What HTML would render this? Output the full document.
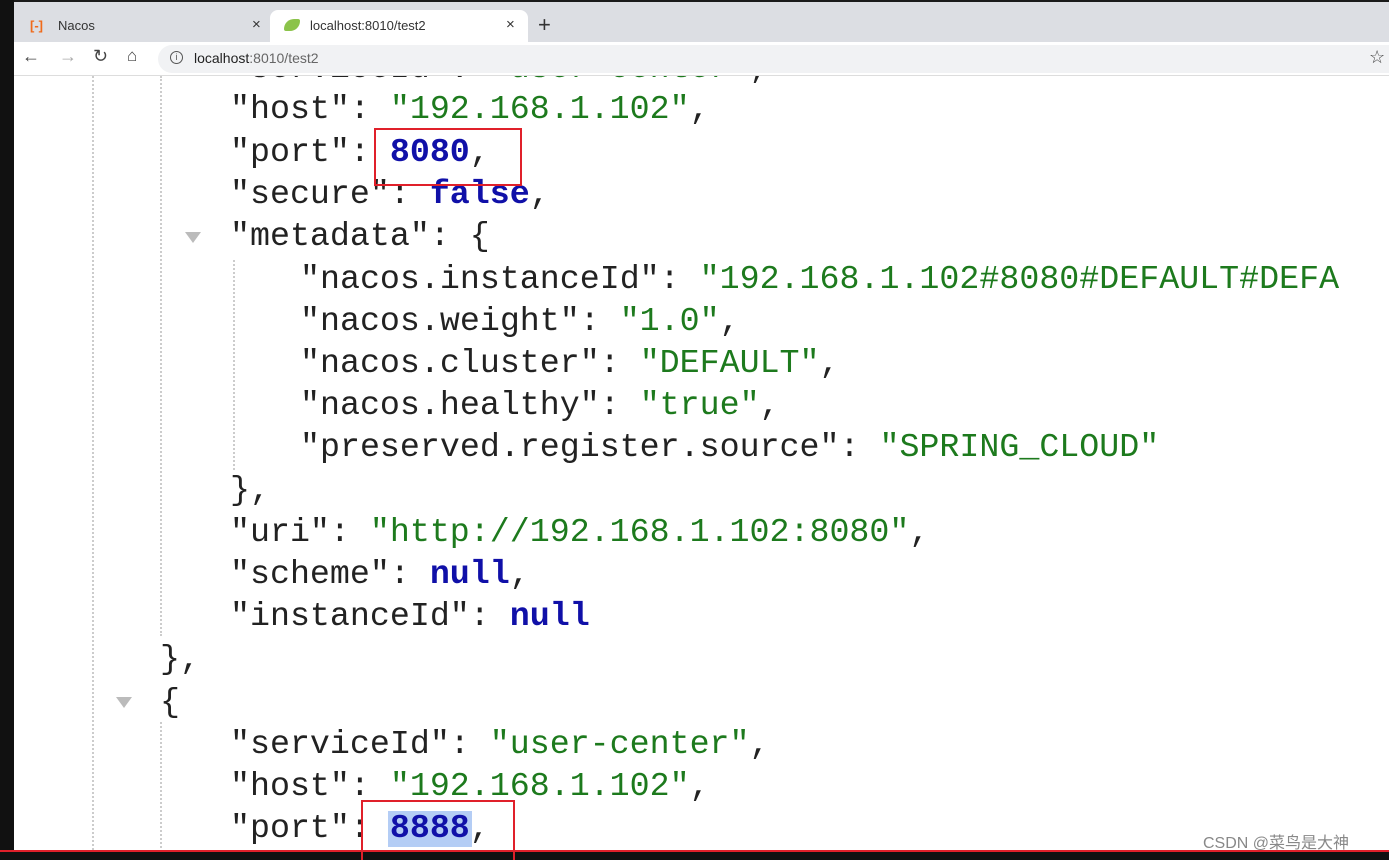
<!DOCTYPE html><html><head><style>
html,body{margin:0;width:1389px;height:860px;overflow:hidden}
body{background:#fff;position:relative;font-family:"Liberation Sans",sans-serif}
.l{position:absolute;font-family:"Liberation Mono",monospace;font-size:33.3px;line-height:42px;color:#222;white-space:pre}
.s{color:#1d7a1d}.n{color:#1010a8;font-weight:bold}
.dot{position:absolute;border-left:2px dotted #ccc;width:0}
.box{position:absolute;border:2px solid #e0202a}
</style></head><body>
<div class="l" style="left:230px;top:47px">"serviceId": <span class="s">"user-center"</span>,</div>
<div style="position:absolute;left:0;top:0;width:1389px;height:2px;background:#1a1a1a"></div>
<div style="position:absolute;left:0;top:2px;width:1389px;height:40px;background:#dcdee3"></div>
<div style="position:absolute;left:14px;top:14px;width:256px;height:28px;font-size:13px;color:#333"><span style="position:absolute;left:16px;top:4px;color:#f06a1a;font-weight:bold">[-]</span><span style="position:absolute;left:44px;top:4px">Nacos</span><span style="position:absolute;left:238px;top:2px;font-size:15px">×</span></div>
<div style="position:absolute;left:270px;top:10px;width:258px;height:32px;background:#fff;border-radius:8px 8px 0 0;font-size:13px;color:#333"><span style="position:absolute;left:14px;top:9px;width:16px;height:12px;background:#8bc34a;border-radius:10px 2px 10px 2px"></span><span style="position:absolute;left:40px;top:8px">localhost:8010/test2</span><span style="position:absolute;left:236px;top:6px;font-size:15px">×</span></div>
<div style="position:absolute;left:538px;top:12px;font-size:22px;color:#333">+</div>
<div style="position:absolute;left:0;top:42px;width:1389px;height:33px;background:#fff;border-bottom:1px solid #ddd"></div>
<div style="position:absolute;left:22px;top:46px;font-size:18px;color:#444">←</div>
<div style="position:absolute;left:59px;top:46px;font-size:18px;color:#aaa">→</div>
<div style="position:absolute;left:93px;top:46px;font-size:18px;color:#444">↻</div>
<div style="position:absolute;left:127px;top:46px;font-size:17px;color:#444">⌂</div>
<div style="position:absolute;left:158px;top:45px;width:1231px;height:28px;background:#f1f2f4;border-radius:14px 0 0 14px"></div>
<div style="position:absolute;left:170px;top:51px;width:11px;height:11px;border:1.5px solid #555;border-radius:50%;font-size:9px;text-align:center;line-height:11px;color:#555">i</div>
<div style="position:absolute;left:194px;top:50px;font-size:14px;color:#222">localhost<span style="color:#666">:8010/test2</span></div>
<div style="position:absolute;left:1369px;top:47px;font-size:18px;color:#444">☆</div>
<div style="position:absolute;left:0;top:0;width:14px;height:860px;background:#111"></div>
<div class="dot" style="left:92px;top:76px;height:774px"></div>
<div class="dot" style="left:160px;top:76px;height:560px"></div>
<div class="dot" style="left:233px;top:260px;height:210px"></div>
<div class="dot" style="left:160px;top:722px;height:130px"></div>
<div style="position:absolute;left:185px;top:232px;border:8px solid transparent;border-top:11px solid #bbb"></div>
<div style="position:absolute;left:116px;top:697px;border:8px solid transparent;border-top:11px solid #bbb"></div>
<div class="l" style="left:230px;top:88px">"host": <span class="s">"192.168.1.102"</span>,</div>
<div class="l" style="left:230px;top:131px">"port": <span class="n">8080</span>,</div>
<div class="l" style="left:230px;top:173px">"secure": <span class="n">false</span>,</div>
<div class="l" style="left:230px;top:215px">"metadata": {</div>
<div class="l" style="left:300px;top:258px">"nacos.instanceId": <span class="s">"192.168.1.102#8080#DEFAULT#DEFA</span></div>
<div class="l" style="left:300px;top:300px">"nacos.weight": <span class="s">"1.0"</span>,</div>
<div class="l" style="left:300px;top:342px">"nacos.cluster": <span class="s">"DEFAULT"</span>,</div>
<div class="l" style="left:300px;top:384px">"nacos.healthy": <span class="s">"true"</span>,</div>
<div class="l" style="left:300px;top:426px">"preserved.register.source": <span class="s">"SPRING_CLOUD"</span></div>
<div class="l" style="left:230px;top:469px">},</div>
<div class="l" style="left:230px;top:511px">"uri": <span class="s">"http://192.168.1.102:8080"</span>,</div>
<div class="l" style="left:230px;top:553px">"scheme": <span class="n">null</span>,</div>
<div class="l" style="left:230px;top:595px">"instanceId": <span class="n">null</span></div>
<div class="l" style="left:160px;top:638px">},</div>
<div class="l" style="left:160px;top:681px">{</div>
<div class="l" style="left:230px;top:723px">"serviceId": <span class="s">"user-center"</span>,</div>
<div class="l" style="left:230px;top:765px">"host": <span class="s">"192.168.1.102"</span>,</div>
<div style="position:absolute;left:388px;top:811px;width:84px;height:36px;background:#b4cdf5"></div>
<div class="l" style="left:230px;top:807px">"port": <span class="n">8888</span>,</div>
<div class="box" style="left:374px;top:128px;width:144px;height:54px"></div>
<div style="position:absolute;left:0;top:850px;width:1389px;height:10px;background:#111;border-top:2px solid #e0202a;box-sizing:border-box"></div>
<div class="box" style="left:361px;top:800px;width:150px;height:62px"></div>
<div style="position:absolute;left:1203px;top:829px;font-size:16px;color:#888;font-family:'Liberation Sans','Noto Sans CJK SC',sans-serif">CSDN @菜鸟是大神</div>
</body></html>
